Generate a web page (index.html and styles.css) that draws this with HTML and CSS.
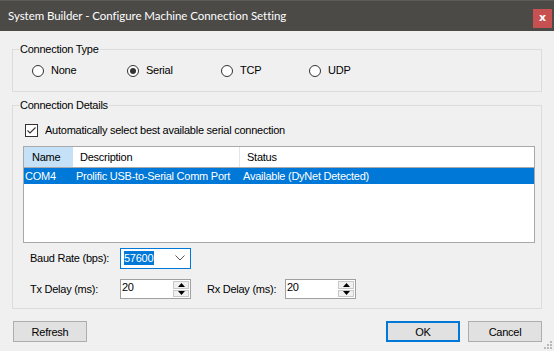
FILE: index.html
```html
<!DOCTYPE html>
<html lang="en">
<head>
  <meta charset="UTF-8">
  <title>System Builder - Configure Machine Connection Setting</title>
  <link rel="stylesheet" href="styles.css">
</head>
<body>
  <div class="window">
    <div class="titlebar">
      <span class="title">System Builder - Configure Machine Connection Setting</span>
      <span class="close">x</span>
    </div>

    <div class="content">
      <fieldset class="group group-type">
        <legend>Connection Type</legend>
        <div class="radios">
          <label class="radio"><span class="circle"></span>None</label>
          <label class="radio checked"><span class="circle"></span>Serial</label>
          <label class="radio"><span class="circle"></span>TCP</label>
          <label class="radio"><span class="circle"></span>UDP</label>
        </div>
      </fieldset>

      <fieldset class="group group-details">
        <legend>Connection Details</legend>
        <label class="check">
          <span class="box">
            <svg width="11" height="11" viewBox="0 0 11 11"><polyline points="1.5,5.5 4,8 9.5,2.5" fill="none" stroke="#333" stroke-width="1.1"/></svg>
          </span>
          Automatically select best available serial connection
        </label>

        <div class="list">
          <div class="list-head">
            <span class="col col-name hot">Name</span>
            <span class="col col-desc">Description</span>
            <span class="col col-status">Status</span>
          </div>
          <div class="list-row selected">
            <span class="cell cell-name">COM4</span>
            <span class="cell cell-desc">Prolific USB-to-Serial Comm Port</span>
            <span class="cell cell-status">Available (DyNet Detected)</span>
          </div>
        </div>

        <div class="field-row baud">
          <span class="field-label">Baud Rate (bps):</span>
          <div class="combo">
            <span class="combo-value">57600</span>
            <svg class="chevron" width="10" height="6" viewBox="0 0 10 6"><polyline points="0.5,0.5 5,5 9.5,0.5" fill="none" stroke="#555" stroke-width="1"/></svg>
          </div>
        </div>

        <div class="field-row delays">
          <span class="field-label">Tx Delay (ms):</span>
          <div class="spin">
            <span class="spin-value">20</span>
            <div class="spin-buttons">
              <span class="spin-btn"><svg width="7" height="4" viewBox="0 0 7 4"><polygon points="0,4 3.5,0 7,4" fill="#000"/></svg></span>
              <span class="spin-btn"><svg width="7" height="4" viewBox="0 0 7 4"><polygon points="0,0 7,0 3.5,4" fill="#000"/></svg></span>
            </div>
          </div>
          <span class="field-label rx">Rx Delay (ms):</span>
          <div class="spin">
            <span class="spin-value">20</span>
            <div class="spin-buttons">
              <span class="spin-btn"><svg width="7" height="4" viewBox="0 0 7 4"><polygon points="0,4 3.5,0 7,4" fill="#000"/></svg></span>
              <span class="spin-btn"><svg width="7" height="4" viewBox="0 0 7 4"><polygon points="0,0 7,0 3.5,4" fill="#000"/></svg></span>
            </div>
          </div>
        </div>
      </fieldset>

      <div class="buttons">
        <button class="btn">Refresh</button>
        <span class="spacer"></span>
        <button class="btn btn-default">OK</button>
        <button class="btn">Cancel</button>
      </div>
    </div>

    <svg class="grip" width="8" height="8" viewBox="0 0 8 8">
      <rect x="6" y="0" width="2" height="2" fill="#b9b9b9"/>
      <rect x="3" y="3" width="2" height="2" fill="#b9b9b9"/>
      <rect x="6" y="3" width="2" height="2" fill="#b9b9b9"/>
      <rect x="0" y="6" width="2" height="2" fill="#b9b9b9"/>
      <rect x="3" y="6" width="2" height="2" fill="#b9b9b9"/>
      <rect x="6" y="6" width="2" height="2" fill="#b9b9b9"/>
    </svg>
  </div>
</body>
</html>
```

FILE: styles.css
```css
* {
  box-sizing: border-box;
}

body {
  margin: 0;
  padding: 0;
  background-color: #f0f0f0;
  font-family: "Liberation Sans", Arial, sans-serif;
  font-size: 11px;
  letter-spacing: -0.25px;
  color: #000;
}

.window {
  position: relative;
  width: 554px;
  height: 351px;
  background-color: #f0f0f0;
  overflow: hidden;
}

/* title bar */
.titlebar {
  display: flex;
  align-items: center;
  height: 31px;
  padding: 0 2px 0 8px;
  background-color: #4b4a47;
  border-top: 1px solid #5c5b58;
}

.title {
  flex: 1;
  color: #fff;
  font-family: Lato, sans-serif;
  font-size: 11.5px;
  letter-spacing: -0.05px;
  margin-top: -2px;
}

.close {
  width: 19px;
  height: 19px;
  margin-top: 4px;
  background-color: #c75050;
  color: #fff;
  font-family: "DejaVu Sans", sans-serif;
  font-weight: bold;
  font-size: 11px;
  letter-spacing: 0;
  line-height: 18px;
  text-align: center;
}

.content {
  padding: 12px 12px 0 12px;
}

/* group boxes */
.group {
  margin: 0;
  min-width: 0;
  border: 1px solid #dcdcdc;
  padding: 0 0 0 4px;
}

.group legend {
  margin-left: 2px;
  padding: 0 1px;
  line-height: 13px;
}

.group-type {
  padding-top: 8px;
  padding-bottom: 14px;
  margin-bottom: 7px;
}

.group-details {
  padding-top: 12px;
  padding-bottom: 9px;
}

/* radios */
.radios {
  display: grid;
  grid-template-columns: 95px 94px 88px auto;
  margin-left: 15px;
  line-height: 13px;
}

.radio {
  display: flex;
  align-items: center;
  gap: 7px;
}

.circle {
  display: flex;
  align-items: center;
  justify-content: center;
  width: 12px;
  height: 12px;
  border: 1px solid #333;
  border-radius: 50%;
  background-color: #fff;
}

.radio.checked .circle::after {
  content: "";
  width: 6px;
  height: 6px;
  border-radius: 50%;
  background-color: #333;
}

/* checkbox */
.check {
  display: flex;
  align-items: center;
  gap: 7px;
  margin-left: 8px;
  line-height: 13px;
}

.box {
  display: flex;
  align-items: center;
  justify-content: center;
  width: 13px;
  height: 13px;
  border: 1px solid #333;
  background-color: #fff;
}

/* list view */
.list {
  width: 512px;
  height: 97px;
  margin: 9px 0 0 6px;
  border: 1px solid #a9a9a9;
  background-color: #fff;
}

.list-head {
  display: flex;
  height: 21px;
  border-bottom: 1px solid #a9a9a9;
  line-height: 20px;
}

.col {
  padding-left: 7px;
}

.col-name {
  width: 49px;
  padding-left: 8px;
}

.col-name.hot {
  background-color: #c5e1f7;
}

.col-desc {
  width: 167px;
  border-right: 1px solid #e5e5e5;
}

.list-row {
  display: flex;
  height: 16px;
  line-height: 16px;
}

.list-row.selected {
  background-color: #0078d7;
  color: #fff;
}

.cell {
  padding-left: 3px;
  white-space: nowrap;
}

.cell-name {
  width: 49px;
  padding-left: 1px;
}

.cell-desc {
  width: 167px;
}

/* fields */
.field-row {
  display: flex;
  align-items: center;
  margin-left: 13px;
  height: 20px;
}

.baud {
  margin-top: 5px;
}

.delays {
  margin-top: 11px;
}

.field-label {
  width: 90px;
}

.field-label.rx {
  width: 78px;
  margin-left: 16px;
}

.combo {
  display: flex;
  align-items: center;
  width: 71px;
  height: 21px;
  padding: 0 5px 0 2px;
  border: 1px solid #0078d7;
  background-color: #fff;
}

.combo-value {
  flex: 1;
  color: #fff;
  background: linear-gradient(#0078d7, #0078d7) no-repeat 1px 1px / 30px 14px;
  padding-left: 1px;
  line-height: 16px;
}

.spin {
  display: flex;
  width: 71px;
  height: 20px;
  border: 1px solid #a0a0a0;
  background-color: #fff;
}

.spin-value {
  flex: 1;
  padding-left: 1px;
  line-height: 15px;
}

.spin-buttons {
  display: flex;
  flex-direction: column;
  width: 16px;
  margin: 1px;
  gap: 1px;
}

.spin-btn {
  flex: 1;
  display: flex;
  align-items: center;
  justify-content: center;
  background-color: #f0f0f0;
  border: 1px solid #c8c8c8;
}

/* bottom buttons */
.buttons {
  display: flex;
  gap: 8px;
  margin-top: 12px;
  padding-left: 1px;
}

.spacer {
  flex: 1;
}

.btn {
  width: 74px;
  height: 21px;
  padding: 0;
  background-color: #e1e1e1;
  border: 1px solid #adadad;
  font-family: "Liberation Sans", Arial, sans-serif;
  font-size: 11px;
  letter-spacing: -0.25px;
  color: #000;
}

.btn-default {
  border: 2px solid #0078d7;
}

.grip {
  position: absolute;
  right: 2px;
  bottom: 2px;
}
```
